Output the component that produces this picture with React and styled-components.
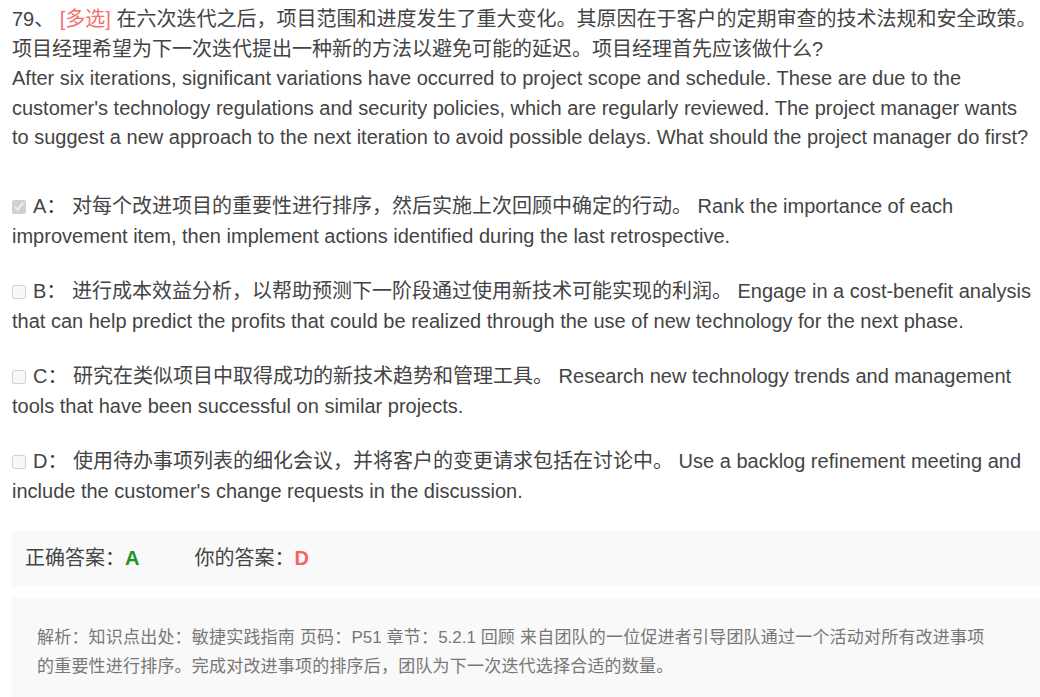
import React from "react";
import styled, { createGlobalStyle } from "styled-components";

const Global = createGlobalStyle`
  html, body { margin: 0; padding: 0; background: #fff; }
  body {
    font-family: "Liberation Sans", Arial, "Noto Sans CJK SC", sans-serif;
    color: #444;
  }
`;

const Page = styled.div`
  width: 1040px;
  box-sizing: border-box;
  padding: 5px 0 0 12px;
  display: flex;
  flex-direction: column;
`;

const Question = styled.div`
  font-size: 20px;
  line-height: 29.5px;
`;

const QuestionEn = styled.div`
  padding-right: 8px;
`;

const Zh = styled.span`
  letter-spacing: ${(p) => p.$ls ?? 0}px;
`;

const Tag = styled.span`
  color: #f46e6e;
`;

const Options = styled.div`
  margin-top: 38px;
  display: flex;
  flex-direction: column;
  gap: 25px;
`;

const Option = styled.label`
  display: block;
  font-size: 20px;
  line-height: 30px;
`;

const Check = styled.input`
  width: 14px;
  height: 14px;
  margin: 0 7px 0 0;
  vertical-align: -1px;
`;

const AnswerBox = styled.div`
  margin-top: 25px;
  background: #f9f9f9;
  padding: 12px 13px 13px;
  font-size: 20px;
  line-height: 30px;
  display: flex;
  gap: 55px;
`;

const AnswerItem = styled.span``;

const Letter = styled.b`
  color: ${(p) => p.$color};
  font-weight: bold;
`;

const Analysis = styled.div`
  margin-top: 12px;
  background: #f9f9f9;
  padding: 25px 42px 30px 25px;
  font-size: 17px;
  line-height: 29px;
  color: #777;
`;

const options = [
  {
    k: "A",
    checked: true,
    zh: "对每个改进项目的重要性进行排序，然后实施上次回顾中确定的行动。",
    en: "Rank the importance of each improvement item, then implement actions identified during the last retrospective.",
  },
  {
    k: "B",
    zh: "进行成本效益分析，以帮助预测下一阶段通过使用新技术可能实现的利润。",
    en: "Engage in a cost-benefit analysis that can help predict the profits that could be realized through the use of new technology for the next phase.",
  },
  {
    k: "C",
    zh: "研究在类似项目中取得成功的新技术趋势和管理工具。",
    en: "Research new technology trends and management tools that have been successful on similar projects.",
  },
  {
    k: "D",
    zh: "使用待办事项列表的细化会议，并将客户的变更请求包括在讨论中。",
    en: "Use a backlog refinement meeting and include the customer's change requests in the discussion.",
  },
];

export default function App() {
  return (
    <>
      <Global />
      <Page>
        <Question>
          <div>
            79、 <Tag>[多选]</Tag>{" "}
            在六次迭代之后，项目范围和进度发生了重大变化。其原因在于客户的定期审查的技术法规和安全政策。项目经理希望为下一次迭代提出一种新的方法以避免可能的延迟。项目经理首先应该做什么?
          </div>
          <QuestionEn>
            After six iterations, significant variations have occurred to project scope and schedule. These are due to the customer's technology regulations and security policies, which are regularly reviewed. The project manager wants to suggest a new approach to the next iteration to avoid possible delays. What should the project manager do first?
          </QuestionEn>
        </Question>
        <Options>
          {options.map((o) => (
            <Option key={o.k}>
              <Check type="checkbox" disabled defaultChecked={!!o.checked} />
              {o.k}
              <Zh>：</Zh> <Zh>{o.zh}</Zh> {o.en}
            </Option>
          ))}
        </Options>
        <AnswerBox>
          <AnswerItem>
            <Zh>正确答案：</Zh>
            <Letter $color="#1c961c">A</Letter>
          </AnswerItem>
          <AnswerItem>
            <Zh>你的答案：</Zh>
            <Letter $color="#f46464">D</Letter>
          </AnswerItem>
        </AnswerBox>
        <Analysis>
          <Zh $ls={0.2}>解析：知识点出处：敏捷实践指南 页码：</Zh>P51{" "}
          <Zh $ls={0.2}>章节：</Zh>5.2.1{" "}
          <Zh $ls={0.2}>
            回顾 来自团队的一位促进者引导团队通过一个活动对所有改进事项的重要性进行排序。完成对改进事项的排序后，团队为下一次迭代选择合适的数量。
          </Zh>
        </Analysis>
      </Page>
    </>
  );
}
